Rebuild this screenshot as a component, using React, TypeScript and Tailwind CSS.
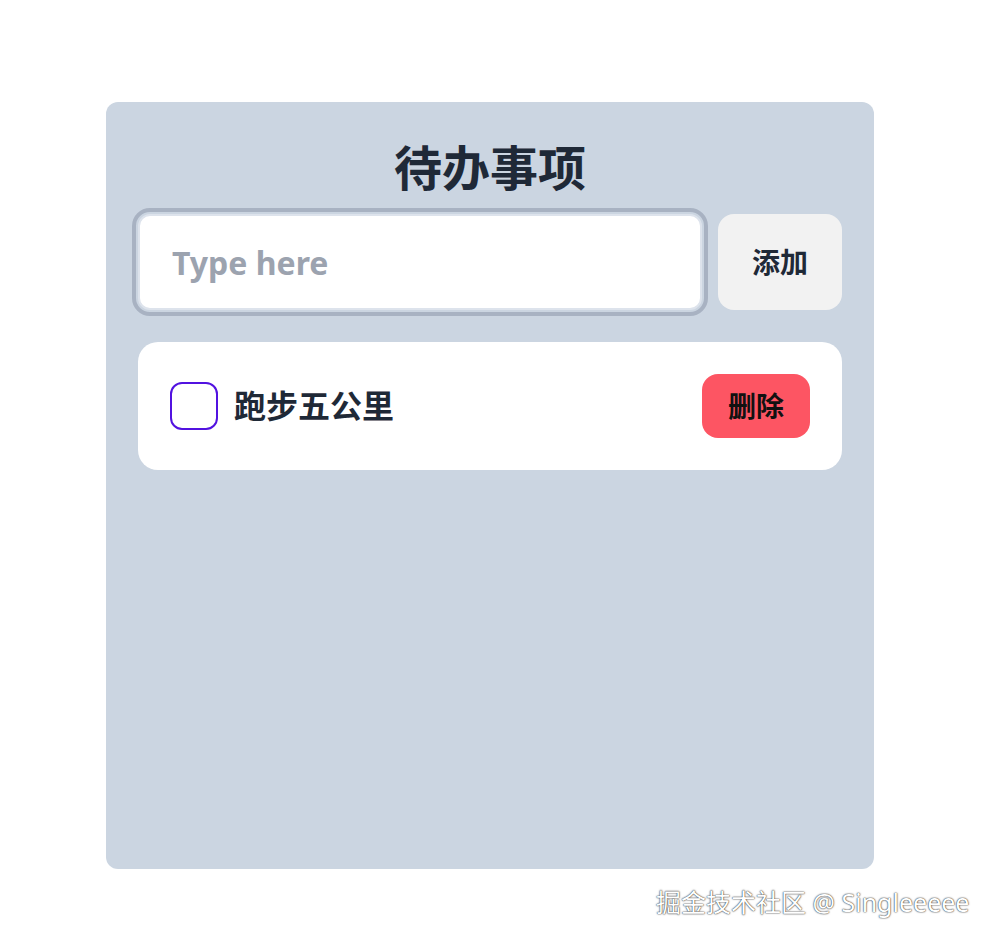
import { useState } from 'react';

type Todo = { id: number; text: string; done: boolean };

export default function App() {
  const [todos, setTodos] = useState<Todo[]>([{ id: 1, text: '跑步五公里', done: false }]);
  const [value, setValue] = useState('');

  const add = () => {
    if (!value.trim()) return;
    setTodos([...todos, { id: Date.now(), text: value.trim(), done: false }]);
    setValue('');
  };

  return (
    <div className="relative min-h-[945px] w-full bg-white font-['Noto_Sans','Noto_Sans_CJK_SC',sans-serif]">
      <div className="pt-[102px] pl-[106px]">
        <div className="flex h-[767px] w-[768px] flex-col rounded-xl bg-[#cbd5e1] p-8">
          <h1 className="mb-2 text-center text-[48px] leading-[68px] font-bold text-[#1f2937]">待办事项</h1>

          <div className="mt-1 flex gap-4">
            <input
              autoFocus
              value={value}
              onChange={(e) => setValue(e.target.value)}
              placeholder="Type here"
              className="h-24 flex-1 rounded-xl border-2 border-[#dde3ec] bg-white px-8 text-[32px] font-bold text-[#1f2937] outline-4 outline-offset-2 outline-[#a8b2c2] outline-solid placeholder:text-[#9ca3af] focus:outline-4 focus:outline-offset-2 focus:outline-[#a8b2c2]"
            />
            <button
              onClick={add}
              className="h-24 w-[124px] rounded-2xl bg-[#f2f2f2] text-[28px] font-bold text-[#1f2937]"
            >
              添加
            </button>
          </div>

          <ul className="mt-8 flex flex-col gap-4">
            {todos.map((t) => (
              <li key={t.id} className="flex items-center rounded-[20px] bg-white p-8">
                <button
                  onClick={() => setTodos(todos.map((x) => (x.id === t.id ? { ...x, done: !x.done } : x)))}
                  className="h-12 w-12 shrink-0 rounded-xl border-2 border-[#5212e0] bg-white"
                />
                <span className="ml-4 flex-1 text-[32px] font-bold text-[#1f2937]">{t.text}</span>
                <button
                  onClick={() => setTodos(todos.filter((x) => x.id !== t.id))}
                  className="h-16 w-[108px] rounded-2xl bg-[#fd5563] text-[28px] font-bold text-[#111]"
                >
                  删除
                </button>
              </li>
            ))}
          </ul>
        </div>
      </div>

      <div className="absolute top-[884px] left-[656px] text-[25px] text-white [text-shadow:0_0_1px_#222,0_0_2px_#555]">
        掘金技术社区 @ Singleeeee
      </div>
    </div>
  );
}
